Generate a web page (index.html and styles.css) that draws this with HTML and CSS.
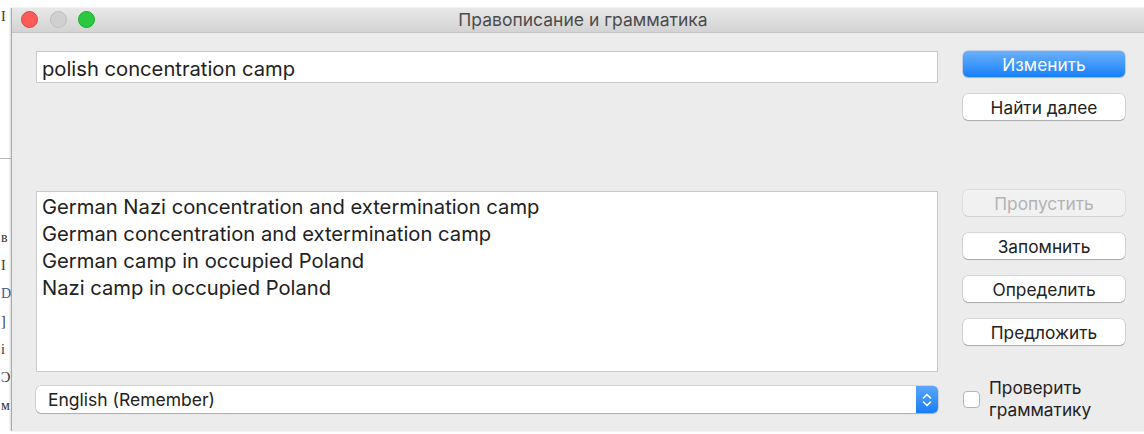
FILE: index.html
```html
<!DOCTYPE html>
<html lang="ru">
<head>
<meta charset="utf-8">
<title>Правописание и грамматика</title>
<link rel="stylesheet" href="styles.css">
</head>
<body>
<div class="screen">
  <div class="backdoc">
    <span class="g g-top">I</span>
    <span class="rule"></span>
    <span class="g">в</span>
    <span class="g">I</span>
    <span class="g blue">D</span>
    <span class="g">]</span>
    <span class="g">i</span>
    <span class="g">Ͻ</span>
    <span class="g">м</span>
  </div>

  <div class="window">
    <div class="titlebar">
      <div class="lights">
        <span class="light red"></span>
        <span class="light gray"></span>
        <span class="light green"></span>
      </div>
      <div class="title">Правописание и грамматика</div>
    </div>

    <div class="content">
      <div class="left">
        <div class="field">polish concentration camp</div>
        <ul class="list">
          <li>German Nazi concentration and extermination camp</li>
          <li>German concentration and extermination camp</li>
          <li>German camp in occupied Poland</li>
          <li>Nazi camp in occupied Poland</li>
        </ul>
        <div class="popup">
          <span class="popup-label">English (Remember)</span>
          <span class="stepper">
            <svg width="12" height="18" viewBox="0 0 12 18">
              <path d="M2.5 7 L6 3.5 L9.5 7" fill="none" stroke="#fff" stroke-width="1.6" stroke-linecap="round" stroke-linejoin="round"/>
              <path d="M2.5 11 L6 14.5 L9.5 11" fill="none" stroke="#fff" stroke-width="1.6" stroke-linecap="round" stroke-linejoin="round"/>
            </svg>
          </span>
        </div>
      </div>

      <div class="right">
        <button class="btn primary">Изменить</button>
        <button class="btn">Найти далее</button>
        <button class="btn disabled gap-top">Пропустить</button>
        <button class="btn">Запомнить</button>
        <button class="btn">Определить</button>
        <button class="btn">Предложить</button>
        <label class="check">
          <span class="box"></span>
          <span class="check-text">Проверить<br>грамматику</span>
        </label>
      </div>
    </div>
  </div>
</div>
</body>
</html>
```

FILE: styles.css
```css
html, body {
  margin: 0;
  padding: 0;
  background: #fff;
}

.screen {
  display: flex;
  width: 1144px;
  height: 434px;
  overflow: hidden;
  font-family: Inter, "Liberation Sans", Arial, sans-serif;
}

/* slice of the document window behind the dialog */
.backdoc {
  flex: none;
  width: 11px;
  display: flex;
  flex-direction: column;
  overflow: hidden;
  font-family: "Liberation Serif", serif;
  font-size: 14px;
  color: #333;
}
.backdoc .g {
  display: block;
  height: 28px;
  line-height: 28px;
  padding-left: 1px;
}
.backdoc .g-top {
  margin-top: 3px;
}
.backdoc .rule {
  display: block;
  height: 1px;
  background: #bbb;
  margin: 127px 0 65px;
}
.backdoc .blue {
  color: #3a5a9a;
}

/* dialog window */
.window {
  flex: none;
  margin-top: 8px;
  width: 1140px;
  height: 423px;
  background: #ececec;
  border-left: 1px solid #a9a9a9;
  box-shadow: -1px 0 2px rgba(0, 0, 0, 0.15);
}

.titlebar {
  position: relative;
  height: 24px;
  background: linear-gradient(#e9e8e9, #d4d3d4);
  border-bottom: 1px solid #c3c3c3;
  display: flex;
  align-items: center;
  justify-content: center;
}

.lights {
  position: absolute;
  left: 9px;
  top: 3px;
  display: flex;
  gap: 11.5px;
}
.light {
  width: 17px;
  height: 17px;
  border-radius: 50%;
  box-sizing: border-box;
}
.light.red {
  background: #fc5b57;
  border: 1px solid #e0443e;
}
.light.gray {
  background: #d0d0d0;
  border: 1px solid #bdbdbd;
}
.light.green {
  background: #2ac840;
  border: 1px solid #1daa2c;
}

.title {
  margin-left: 2px;
  font-size: 17.5px;
  color: #4b4b4b;
  line-height: 24px;
}

.content {
  display: flex;
  padding: 18px 0 0 24px;
}

.left {
  width: 902px;
  display: flex;
  flex-direction: column;
}

.field {
  height: 32px;
  box-sizing: border-box;
  background: #fff;
  border: 1px solid #c9c9c9;
  padding: 0 5px;
  font-size: 20.2px;
  line-height: 34px;
  color: #222;
}

.list {
  list-style: none;
  margin: 108px 0 0;
  padding: 1px 5px 0;
  height: 181px;
  box-sizing: border-box;
  background: #fff;
  border: 1px solid #c9c9c9;
  font-size: 20.2px;
  line-height: 27px;
  color: #222;
}

.popup {
  margin-top: 14px;
  height: 27px;
  display: flex;
  background: #fff;
  border-radius: 5px;
  box-shadow: 0 0 0 0.5px rgba(0, 0, 0, 0.22), 0 1px 1px rgba(0, 0, 0, 0.18);
  overflow: hidden;
}
.popup-label {
  flex: 1;
  padding-left: 12px;
  font-size: 17.5px;
  line-height: 28px;
  color: #222;
}
.stepper {
  width: 22px;
  background: linear-gradient(#5aa6fb, #1a7ef8);
  display: flex;
  align-items: center;
  justify-content: center;
}

.right {
  margin-left: 25px;
  width: 162px;
  display: flex;
  flex-direction: column;
  padding-top: 0;
}

.btn {
  height: 26px;
  margin: 0 0 17px;
  padding: 0;
  font-family: inherit;
  font-size: 17.3px;
  color: #222;
  background: #fff;
  border: none;
  border-radius: 5px;
  box-shadow: 0 0 0 0.5px rgba(0, 0, 0, 0.2), 0 1px 1px rgba(0, 0, 0, 0.2);
}
.btn.primary {
  color: #fff;
  background: linear-gradient(#6bb1fb, #1680fa);
  box-shadow: 0 0 0 0.5px rgba(0, 70, 200, 0.35), 0 1px 1px rgba(0, 0, 0, 0.15);
}
.btn.disabled {
  color: #b3b3b3;
  background: #f1f1f1;
  box-shadow: 0 0 0 0.5px rgba(0, 0, 0, 0.12), 0 1px 1px rgba(0, 0, 0, 0.06);
}
.btn.gap-top {
  margin-top: 53px;
}

.check {
  display: flex;
  align-items: center;
  gap: 9px;
  margin-top: 15px;
}
.box {
  flex: none;
  width: 17px;
  height: 17px;
  box-sizing: border-box;
  background: #fff;
  border: 1px solid #b5b5b5;
  border-radius: 4px;
}
.check-text {
  font-size: 17.3px;
  line-height: 22px;
  color: #222;
}
```
